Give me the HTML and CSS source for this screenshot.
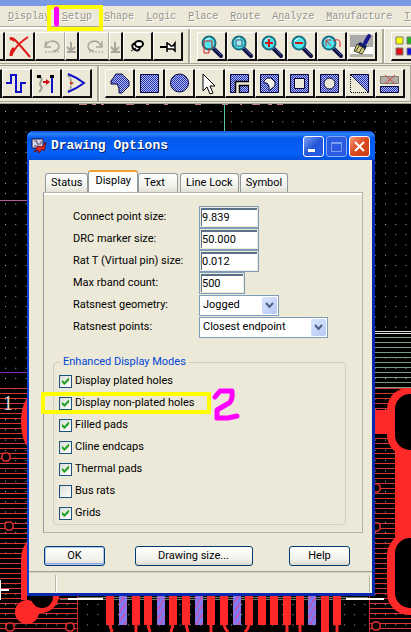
FILE: index.html
```html
<!DOCTYPE html>
<html lang="en">
<head>
<meta charset="utf-8">
<title>Drawing Options</title>
<link rel="stylesheet" href="styles.css">
</head>
<body>
<svg class="defs" aria-hidden="true">
  <defs>
    <pattern id="mesh" width="2" height="2" patternUnits="userSpaceOnUse"><rect width="2" height="2" fill="#b4bdf0"/><path d="M0 0h1v1H0zM1 1h1v1H1z" fill="#2430b4"/></pattern>
    <g id="lens">
      <path d="M15 15l8 8" stroke="#101040" stroke-width="4" stroke-linecap="round"/>
      <path d="M16 15l7 7" stroke="#4a5cc0" stroke-width="1"/>
      <circle cx="11" cy="10" r="6.500" fill="#4fe6ee" stroke="#1a6f80" stroke-width="2"/>
      <path d="M7 8q2-3 5-3" stroke="#fff" fill="none"/>
    </g>
  </defs>
</svg>
<div class="app">
  <div class="app-title"></div>
  <nav class="menubar">
    <a href="#"><u>D</u>isplay</a><a href="#"><u>S</u>et<u>u</u>p</a><a href="#"><u>S</u>hape</a><a href="#"><u>L</u>ogic</a><a href="#"><u>P</u>lace</a><a href="#"><u>R</u>oute</a><a href="#">A<u>n</u>alyze</a><a href="#"><u>M</u>anufacture</a><a href="#"><u>T</u></a>
  </nav>
  <div class="toolbar">
    <button class="tool sliver-wide" aria-label="Copy"></button>
    <button class="tool" aria-label="Delete"><svg viewBox="0 0 27 26"><path d="M4 6q2-2 6 2t14 16M22 4q-9 6-13 12t-4 7" fill="none" stroke="#e01818" stroke-width="2"/><path d="M4 6q3-1 5 2M5 23q0-5 3-8" fill="none" stroke="#e01818" stroke-width="3"/></svg></button>
    <button class="tool flat" aria-label="Undo" disabled><svg viewBox="0 0 27 26"><path d="M10 8l-1 6h6M9 14q2-6 8-6 6 1 6 6-1 4-6 4" fill="none" stroke="#a8a598" stroke-width="1.500"/><path d="M9 19h15" stroke="#a8a598" stroke-dasharray="2 1"/></svg></button>
    <button class="tool drop" aria-label="Undo list" disabled><svg viewBox="0 0 11 26"><path d="M5 9v8M1 14l4 4 4-4M1 19h9" fill="none" stroke="#a8a598" stroke-width="2"/></svg></button>
    <button class="tool flat" aria-label="Redo" disabled><svg viewBox="0 0 27 26"><path d="M22 8v6h-6M21 13q-2-5-7-5-6 1-6 6 1 4 6 4" fill="none" stroke="#a8a598" stroke-width="1.500"/><path d="M9 19h15" stroke="#a8a598" stroke-dasharray="2 1"/></svg></button>
    <button class="tool drop" aria-label="Redo list" disabled><svg viewBox="0 0 11 26"><path d="M5 9v8M1 14l4 4 4-4M1 19h9" fill="none" stroke="#a8a598" stroke-width="2"/></svg></button>
    <button class="tool" aria-label="Pin"><svg viewBox="0 0 27 26"><ellipse cx="12" cy="14" rx="4" ry="3" transform="rotate(40 12 14)" fill="#fff" stroke="#000" stroke-width="2"/><ellipse cx="15" cy="11" rx="4" ry="3" fill="#fff" stroke="#000" stroke-width="2"/><path d="M7 18l5-3" stroke="#000"/></svg></button>
    <button class="tool" aria-label="Unpin"><svg viewBox="0 0 27 26"><path d="M6 14h7" stroke="#000" stroke-width="2"/><path d="M13 9v10M13 11h2l2 2h2l2-3v8l-2-2h-6" fill="#fff" stroke="#000" stroke-width="1.500"/></svg></button>
    <span class="sep"></span>
    <button class="tool" aria-label="Zoom window"><svg viewBox="0 0 27 26"><use href="#lens"/><path d="M6 20V8h8v8M6 20h5v-5" fill="none" stroke="#d02020"/></svg></button>
    <button class="tool" aria-label="Zoom fit"><svg viewBox="0 0 27 26"><use href="#lens"/><path d="M8 7h6v6H8z" fill="#a9eef2" stroke="#3a5578"/></svg></button>
    <button class="tool" aria-label="Zoom in"><svg viewBox="0 0 27 26"><use href="#lens"/><path d="M7 10h8M11 6v8" stroke="#d01818" stroke-width="2"/></svg></button>
    <button class="tool" aria-label="Zoom out"><svg viewBox="0 0 27 26"><use href="#lens"/><path d="M7 10h8" stroke="#d01818" stroke-width="2"/></svg></button>
    <button class="tool" aria-label="Zoom previous"><svg viewBox="0 0 27 26"><use href="#lens"/><path d="M8 13V7h5M8 7l5 6M15 8q6-3 7 1v5" fill="none" stroke="#d02828"/></svg></button>
    <button class="tool" aria-label="Redraw"><svg viewBox="0 0 27 26"><path d="M2 2h23v12H2z" fill="#aaa"/><path d="M2 14h23v7H2z" fill="#fff"/><path d="M2 21h23v3H2z" fill="#b4b4ac"/><path d="M17 10l4-7" stroke="#1a1a90" stroke-width="4" stroke-linecap="round"/><path d="M12 9l7 4-2 4-8-5z" fill="#111c60"/><path d="M9 11l8 5-3 5-8-3z" fill="#d9d28a" stroke="#3c3c20"/><path d="M11 13l-3 5M14 15l-3 5" stroke="#3c3c20"/></svg></button>
    <span class="sep"></span>
    <button class="tool" aria-label="Color"><svg viewBox="0 0 27 26"><path d="M4 4h7v7H4z" fill="#ff0" stroke="#777"/><path d="M15 4h7v7h-7z" fill="#1fb41f" stroke="#777"/><path d="M4 15h7v7H4z" fill="#e01010" stroke="#777"/><path d="M15 15h7v7h-7z" fill="#1010e0" stroke="#777"/></svg></button>
  </div>
  <div class="toolbar">
    <button class="tool sliver" aria-label="Route"></button>
    <button class="tool" aria-label="Delay tune"><svg viewBox="0 0 27 26"><path d="M3 13h5V5h5v17h5v-9h5" fill="none" stroke="#1010c8" stroke-width="2"/></svg></button>
    <button class="tool" aria-label="Custom smooth"><svg viewBox="0 0 27 26"><path d="M6 7q4 1 2 4t0 5-2 6" fill="none" stroke="#a0a096" stroke-width="2"/><path d="M19 8v15" stroke="#1010c8" stroke-width="2"/><path d="M4 5h4v3H4zM17 5h4v3h-4z"/><path d="M10 12h6" stroke="#d01010" stroke-width="2"/><path d="M13 9l4 3-4 3z" fill="#d01010"/></svg></button>
    <button class="tool" aria-label="Spread"><svg viewBox="0 0 27 26"><path d="M5 5q7 8 0 17" fill="none" stroke="#a0a096" stroke-width="2" stroke-dasharray="3 1"/><path d="M5 4q8 3 16 9Q13 19 5 22" fill="none" stroke="#1010c8" stroke-width="2"/><path d="M7 11l4 2-4 2z" fill="#c04020"/></svg></button>
    <span class="sep narrow"></span>
    <button class="tool" aria-label="Shape polygon"><svg viewBox="0 0 27 26"><path d="M10 4h6l7 7v5l-7 7h-3v-5l-2-4H5v-3z" fill="url(#mesh)" stroke="#050540"/></svg></button>
    <button class="tool" aria-label="Shape rectangle"><svg viewBox="0 0 27 26"><path d="M4.500 4.500h18v18h-18z" fill="url(#mesh)" stroke="#050540"/></svg></button>
    <button class="tool" aria-label="Shape circle"><svg viewBox="0 0 27 26"><circle cx="13.500" cy="13" r="9" fill="url(#mesh)" stroke="#050540"/></svg></button>
    <button class="tool" aria-label="Shape select"><svg viewBox="0 0 27 26"><path d="M7 4v17l4-4 3 7 3-1-3-7h5z" fill="#fff" stroke="#000"/></svg></button>
    <button class="tool" aria-label="Shape edit"><svg viewBox="0 0 27 26"><path d="M4.500 4.500h18v18h-18z" fill="url(#mesh)" stroke="#050540"/><path d="M11 23V13h12" fill="none" stroke="#ece9d8" stroke-width="4"/><path d="M9.500 23V11.500H23M13.500 23v-7.500H23" fill="none" stroke="#000" stroke-width="1.500"/></svg></button>
    <button class="tool" aria-label="Void polygon"><svg viewBox="0 0 27 26"><path d="M4.500 4.500h18v18h-18z" fill="url(#mesh)" stroke="#050540"/><path d="M11 8h4l4 4v4l-5 4h-1v-4l-2-3H8v-2z" fill="#f4f2e8" stroke="#050540"/></svg></button>
    <button class="tool" aria-label="Void rectangle"><svg viewBox="0 0 27 26"><path d="M4.500 4.500h18v18h-18z" fill="url(#mesh)" stroke="#050540"/><path d="M8.500 8.500h10v10h-10z" fill="#ece9d8" stroke="#050540"/></svg></button>
    <button class="tool" aria-label="Void circle"><svg viewBox="0 0 27 26"><path d="M4.500 4.500h18v18h-18z" fill="url(#mesh)" stroke="#050540"/><circle cx="13.500" cy="13.500" r="5.500" fill="#ece9d8" stroke="#050540"/></svg></button>
    <button class="tool" aria-label="Void edit"><svg viewBox="0 0 27 26"><path d="M4.500 4.500h18v18z" fill="url(#mesh)" stroke="#050540"/><path d="M4.500 5v17.500H22" fill="none" stroke="#000" stroke-dasharray="1 1"/></svg></button>
    <button class="tool" aria-label="Delete islands"><svg viewBox="0 0 27 26"><path d="M4.500 6.500h18v7h-18z" fill="#b0aea4" stroke="#333" stroke-dasharray="1 1"/><path d="M9 5l10 9M19 5L9 14" stroke="#e04040"/><path d="M4.500 16.500h18v6h-18z" fill="url(#mesh)" stroke="#050540"/></svg></button>
    <span class="sep"></span>
  </div>
  <main class="workspace">
    <svg class="board" aria-hidden="true">
      <defs>
        <pattern id="dots" x="5" y="111" width="10.270" height="10.270" patternUnits="userSpaceOnUse"><rect width="1" height="1" fill="#b8b8b8"/></pattern>
        <pattern id="redLines" y="388" width="10" height="5" patternUnits="userSpaceOnUse"><rect width="10" height="1" fill="#d83434"/></pattern>
        <pattern id="greenLines" y="332" width="10" height="5" patternUnits="userSpaceOnUse"><rect width="10" height="1" fill="#7a9c80"/></pattern>
        <pattern id="stripe" width="6" height="9" patternUnits="userSpaceOnUse"><rect width="6" height="9" fill="#8078f4"/><path d="M-1 10L7-1" stroke="#c850a8" stroke-width="1.500"/></pattern>
        <path id="via" d="M-2-4h4l2 2v4l-2 2h-4l-2-2v-4z" fill="#000" stroke="#e03030" stroke-width="1.500"/>
      </defs>
      <g transform="translate(0 -104)">
        <rect y="104" width="100%" height="600" fill="url(#dots)"/>
        <path d="M79 104.500h8M92 104.500h4M101 104.500h3M126 104.500h8M146 104.500h3M164 104.500h4M195 104.500h6M222 104.500h6M240 104.500h2M252 104.500h8M268 104.500h4M277 104.500h6" stroke="#c08080"/>
        <path d="M224.500 104v28" stroke="#50c8a0"/>
        <path d="M0 200.500h28" stroke="#b060a0"/>
        <path d="M0 372.500h28" stroke="#8020c0"/>
        <rect y="388" width="77" height="244" fill="url(#redLines)"/>
        <path d="M77.500 590v42M369.500 590v42" stroke="#d02828"/>
        <rect x="374" y="334" width="37" height="54" fill="url(#greenLines)"/>
        <path d="M374 331.500h37M374 333.500h37" stroke="#ddd"/>
        <rect x="369" y="388" width="42" height="244" fill="url(#redLines)"/>
        <g fill="#ff2828">
          <ellipse cx="32" cy="422" rx="11" ry="27"/>
          <path d="M30 538q-9 8-9 22v40h10v-62z"/>
          <path d="M374 410h16v24h-16z"/>
          <rect x="387" y="388" width="44" height="68" rx="21"/>
          <path d="M395 440h16v100h-16z"/>
          <rect x="387" y="533" width="44" height="82" rx="22"/>
        </g>
        <rect x="395" y="394" width="30" height="56" rx="15"/>
        <rect x="395" y="538" width="30" height="70" rx="15"/>
        <path d="M27 596v20l14-2q13-2 15-18" fill="#000"/>
        <path d="M56 592q0 15-15 18l-12 3" fill="none" stroke="#ff2828" stroke-width="7"/>
        <circle cx="27" cy="612" r="12" fill="#ff2828"/>
        <circle cx="42" cy="597" r="11"/>
        <path d="M78 597.500h290M60 599.500h308" stroke="#708070"/>
        <path d="M68 599h35M346 599h38" stroke="#fff" stroke-width="2"/>
        <path d="M106 596h8v29h-8zM132 596h8v29h-8zM144 596h8v29h-8zM169 596h8v29h-8zM182 596h8v29h-8zM207 596h8v29h-8zM220 596h8v29h-8zM245 596h8v29h-8zM258 596h8v29h-8zM270 596h8v29h-8zM283 596h8v29h-8zM296 596h8v29h-8zM321 596h8v36h-8zM333 596h8v29h-8z" fill="#ff2828"/>
        <path d="M119 596h8v29h-8zM157 596h8v29h-8zM195 596h8v29h-8zM233 596h8v29h-8zM308 596h8v29h-8z" fill="url(#stripe)"/>
        <path d="M110 625l2 7M136 625v7M148 625l2 7M173 625l-2 7M186 625l2 7M211 625v7M224 625q1 4 4 7M249 625q-1 4-4 7M287 625v7M300 625v7M337 625v7" fill="none" stroke="#ff2828" stroke-width="3"/>
        <use href="#via" x="6" y="457"/><use href="#via" x="9" y="526"/><use href="#via" x="10" y="627"/><use href="#via" x="70" y="627"/>
        <use href="#via" x="376" y="488"/><use href="#via" x="376" y="527"/><use href="#via" x="376" y="626"/>
        <path d="M0 590h9M0 580v20" stroke="#fff" stroke-width="2"/>
        <text class="pin" x="3" y="410">1</text>
      </g>
    </svg>
    <form class="dialog" onsubmit="return false">
      <header class="titlebar">
        <svg class="logo" viewBox="0 0 16 16" aria-hidden="true"><path d="M1 1h11v9H1z" fill="#dcd8e8" stroke="#201840"/><path d="M3 3h3v3h4V3M3 8h4" fill="none" stroke="#504878"/><path d="M15 4l-4 5-4-1-4 6 4-2 1 3 3-4 2 2z" fill="#e02828" stroke="#701010"/></svg>
        <h1>Drawing Options</h1>
        <button class="win" type="button" aria-label="Minimize"><svg viewBox="0 0 19 19"><path d="M4 12h7v3H4z" fill="#fff"/></svg></button>
        <button class="win dim" type="button" aria-label="Maximize" disabled><svg viewBox="0 0 19 19"><path d="M4.500 5.500h10v9h-10zM4 6.500h11" fill="none" stroke="#7f9df0"/></svg></button>
        <button class="win close" type="button" aria-label="Close"><svg viewBox="0 0 19 19"><path d="M5 5l9 9M14 5l-9 9" stroke="#fff" stroke-width="2"/></svg></button>
      </header>
      <div class="tabs">
        <button type="button" class="tab">Status</button><button type="button" class="tab active">Display</button><button type="button" class="tab roomy">Text</button><button type="button" class="tab">Line Lock</button><button type="button" class="tab">Symbol</button>
      </div>
      <section class="panel">
        <div class="fields">
          <label for="cps">Connect point size:</label><input id="cps" class="box" value="9.839">
          <label for="drc">DRC marker size:</label><input id="drc" class="box" value="50.000">
          <label for="rat">Rat T (Virtual pin) size:</label><input id="rat" class="box" value="0.012">
          <label for="max">Max rband count:</label><input id="max" class="box short" value="500">
          <label for="geo">Ratsnest geometry:</label><span class="combo"><select id="geo"><option>Jogged</option></select><svg viewBox="0 0 15 17"><path d="M4 6l3.500 4L11 6" fill="none" stroke="#4d6185" stroke-width="2"/></svg></span>
          <label for="pts">Ratsnest points:</label><span class="combo wide"><select id="pts"><option>Closest endpoint</option></select><svg viewBox="0 0 15 17"><path d="M4 6l3.500 4L11 6" fill="none" stroke="#4d6185" stroke-width="2"/></svg></span>
        </div>
        <fieldset class="modes">
          <legend>Enhanced Display Modes</legend>
          <label><input type="checkbox" checked>Display plated holes</label>
          <label><input type="checkbox" checked>Display non-plated holes</label>
          <label><input type="checkbox" checked>Filled pads</label>
          <label><input type="checkbox" checked>Cline endcaps</label>
          <label><input type="checkbox" checked>Thermal pads</label>
          <label><input type="checkbox">Bus rats</label>
          <label><input type="checkbox" checked>Grids</label>
        </fieldset>
      </section>
      <div class="actions">
        <button class="push default">OK</button><button class="push big" type="button">Drawing size...</button><button class="push" type="button">Help</button>
      </div>
      <footer class="status"><span></span><span></span></footer>
    </form>
  </main>
  <svg class="marks" aria-hidden="true">
    <path d="M49 7h52v22H49zM43 394h166v18H43z" fill="none" stroke="#ff0" stroke-width="4"/>
    <path d="M56.500 9v15" stroke="#f0f" stroke-width="5" stroke-linecap="round"/>
    <path d="M215 397l5-6h12q1 9-3 12l-12 7v8h11l9-2" fill="none" stroke="#f0f" stroke-width="5" stroke-linecap="round" stroke-linejoin="round"/>
  </svg>
</div>
</body>
</html>
```
FILE: styles.css
```css
* { box-sizing: border-box; }
body { margin: 0; background: #000; font: 11px/14px Roboto, "Liberation Sans", Arial, sans-serif; color: #000; }
button, input, select { font: inherit; color: inherit; margin: 0; border-radius: 0; }
.defs { position: absolute; width: 0; height: 0; }
.app { position: relative; display: flex; flex-direction: column; min-height: 100vh; overflow: hidden; }
.app-title { height: 6px; background: #7b9ae4; }

.menubar { display: flex; gap: 12px; height: 23px; padding: 4px 0 0 8px; overflow: hidden; background: #ece9d8; border-bottom: 2px solid #fff; box-shadow: inset 0 -1px #aca899; font: 10px/14px "Liberation Mono", monospace; }
.menubar a { color: #96938a; text-decoration: none; text-shadow: 1px 1px #fff; }

.toolbar { display: flex; height: 37px; padding-top: 3px; overflow: hidden; background: #ece9d8; border-bottom: 3px double #a5a294; }
.toolbar + .toolbar { height: 38px; }
.tool { flex: 0 0 30px; min-width: 0; height: 29px; padding: 0; background: #ece9d8; border: 1px solid #fff; border-right: 2px solid #111; border-bottom: 2px solid #111; }
.tool svg { display: block; width: 27px; height: 26px; }
.tool.flat { border-right-width: 1px; border-right-color: #aca899; }
.tool.drop { flex-basis: 14px; }
.tool.drop svg { width: 11px; }
.tool.sliver { flex-basis: 2px; border-left: 0; }
.tool.sliver-wide { flex-basis: 5px; border-left: 0; }
.sep { flex: 0 0 14px; margin: -3px 0; background: linear-gradient(90deg, transparent 5px, #aca899 5px 7px, #fff 7px 8px, transparent 8px); }
.sep.narrow { flex-basis: 13px; }

.workspace { position: relative; flex: 1; min-height: 528px; background: #000; }
.board { position: absolute; inset: 0; width: 100%; height: 100%; }
.pin { fill: #ddd; font: 20px "Liberation Serif", serif; }

.dialog { position: absolute; top: 27px; left: 27px; right: 36px; background: #ece9d8; border: solid #0a3fd8; border-width: 0 3px 3px 2px; border-bottom-color: #0828b0; border-right-color: #0828b0; border-radius: 6px 6px 0 0; }
.titlebar { display: flex; align-items: center; gap: 2px; height: 29px; margin: 0 -3px 0 -2px; padding: 1px 5px 0 4px; border-radius: 6px 6px 0 0; background: linear-gradient(#0a50d8, #2f86ff 3px, #0458ea 7px, #0460fa 22px, #0450dc); }
.logo { width: 16px; height: 16px; }
.titlebar h1 { flex: 1; margin: 0 0 0 2px; color: #fff; font: bold 13px/16px "Liberation Mono", monospace; text-shadow: 1px 1px #0a246a; }
.win { width: 21px; height: 21px; padding: 0; border: 1px solid #fff; border-radius: 3px; background: linear-gradient(135deg, #7da2f4, #2456d8 50%, #2a5ee8); }
.win svg { display: block; width: 19px; height: 19px; }
.win.dim { border-color: #88a8f0; background: #2a5be0; }
.win.close { background: linear-gradient(135deg, #f09878, #dc4a20 50%, #c83c14); }

.tabs { display: flex; align-items: flex-end; height: 32px; margin-left: 16px; }
.tab { height: 19px; padding: 0 5px; border: 1px solid #919b9c; border-bottom: 0; border-radius: 3px 3px 0 0; background: linear-gradient(#fff, #f0f0ea 70%, #e2e0d4); }
.tab.roomy { padding-right: 12px; }
.tab.roomy + .tab { margin: 0 1px 0 2px; }
.tab.active { height: 22px; padding: 0 6px 3px; border-top: 2px solid #f0a030; background: #fdfdfb; }
.panel { margin: 0 9px 0 14px; padding: 13px 16px 7px 9px; border: 1px solid #b4b4a8; border-left-color: #919b9c; box-shadow: inset 0 2px #fff; }
.fields { display: grid; grid-template-columns: 126px 1fr; align-items: center; grid-auto-rows: 22px; padding-left: 20px; }
.box { width: 60px; height: 22px; padding: 0 2px; border: 1px solid #7f9db9; background: #fff; box-shadow: inset 0 0 0 1px #ece9d8, inset 1px 2px 0 1px #59708a; }
.box.short { width: 46px; }
.combo { display: flex; align-items: center; width: 80px; height: 21px; border: 1px solid #7f9db9; background: #fff; }
.combo.wide { width: 129px; }
.combo select { flex: 1; min-width: 0; height: 19px; padding: 0 3px; border: 0; background: none; appearance: none; }
.combo svg { width: 15px; height: 17px; margin-right: 1px; border-radius: 2px; background: linear-gradient(135deg, #dce6fe, #b4c8f6); }
.modes { margin: 17px 0 0; padding: 1px 0 0 5px; border: 1px solid #d0d0bf; border-radius: 4px; }
.modes legend { margin-left: 1px; padding: 0 3px; color: #0046d5; }
.modes label { display: flex; align-items: center; gap: 3px; height: 22px; }
.modes input { appearance: none; width: 13px; height: 13px; border: 1px solid #1c5180; background: linear-gradient(135deg, #dcdcd7, #fff); }
.modes input:checked::before { content: ""; display: block; width: 9px; height: 9px; margin: 1px; background: #21a121; clip-path: polygon(10% 35%, 38% 60%, 90% 8%, 90% 42%, 38% 95%, 10% 68%); }

.actions { display: flex; justify-content: space-between; margin: 13px 22px 0 15px; }
.push { width: 61px; height: 20px; padding: 0; border: 1px solid #003c74; border-radius: 3px; background: linear-gradient(#fff, #f2f1ea 70%, #dcd8cc); }
.push.default { box-shadow: inset 0 0 0 1px #b0c8f0, inset 0 -2px #8aaae4; }
.push.big { width: 118px; margin-right: 7px; }
.status { display: flex; justify-content: space-between; height: 22px; margin-top: 5px; padding: 3px 1px 1px 26px; border-top: 1px solid #a5a294; box-shadow: inset 0 1px #d8d4c4; }
.status span { width: 2px; border-left: 1px solid #bab6a6; border-right: 1px solid #fff; }
.marks { position: absolute; inset: 0; width: 100%; height: 100%; pointer-events: none; }
```
